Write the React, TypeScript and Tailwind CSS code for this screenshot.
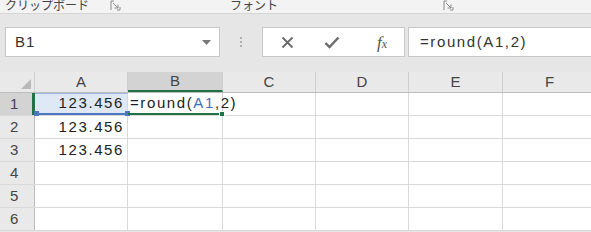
import React from "react";

const FONT = { fontFamily: '"Liberation Sans", "Noto Sans CJK JP", sans-serif' };

const COLS = ["A", "B", "C", "D", "E", "F"];
const ROWS = [1, 2, 3, 4, 5, 6];

function Launcher() {
  return (
    <svg width="11" height="11" viewBox="0 0 11 11" className="text-[#8a8a8a]">
      <path d="M1 10V1h3M10 7v3H7" fill="none" stroke="currentColor" strokeWidth="1" />
      <path d="M3 3l5 5M8 4.5V8H4.5" fill="none" stroke="currentColor" strokeWidth="1" />
    </svg>
  );
}

function Ribbon() {
  return (
    <div className="h-[14px] bg-[#f3f3f3] border-b border-[#d6d6d6] flex items-start text-[#444] text-[12px] leading-[13px]">
      <span className="ml-[5px] w-[105px] shrink-0 whitespace-nowrap">クリップボード</span>
      <span className="shrink-0">
        <Launcher />
      </span>
      <span className="ml-[109px] w-[60px] shrink-0 whitespace-nowrap">フォント</span>
      <span className="ml-[153px] shrink-0">
        <Launcher />
      </span>
    </div>
  );
}

function FormulaBar() {
  return (
    <div className="h-[58px] pt-[13px] flex items-start">
      {/* 名前ボックス */}
      <div className="ml-[5px] w-[215px] h-[30px] bg-white border border-[#c8c8c8] flex items-center justify-between pl-[9px] pr-[8px]">
        <span className="text-[15px] text-[#333] tracking-[1px]">B1</span>
        <svg width="9" height="5" viewBox="0 0 9 5">
          <path d="M0 0h9L4.5 5z" fill="#777" />
        </svg>
      </div>
      <div className="w-[42px] h-[30px] flex flex-col items-center justify-center gap-[2px]">
        <span className="w-[2px] h-[2px] bg-[#b0b0b0]" />
        <span className="w-[2px] h-[2px] bg-[#b0b0b0]" />
        <span className="w-[2px] h-[2px] bg-[#b0b0b0]" />
      </div>
      {/* ボタン群 */}
      <div className="w-[143px] h-[30px] bg-white border border-[#c8c8c8] flex items-center pl-[18px]">
        <svg width="13" height="13" viewBox="0 0 13 13">
          <path d="M1.5 1.5l10 10M11.5 1.5l-10 10" stroke="#6a6a6a" strokeWidth="1.8" fill="none" />
        </svg>
        <svg width="16" height="13" viewBox="0 0 16 13" className="ml-[30px]">
          <path d="M1.5 7l4 4L14.5 1.5" stroke="#6a6a6a" strokeWidth="2.4" fill="none" />
        </svg>
        <span
          className="ml-[37px] italic text-[17px] text-[#555] leading-none"
          style={{ fontFamily: '"Liberation Serif", serif' }}
        >
          f<span className="text-[12px]">x</span>
        </span>
      </div>
      <div className="ml-[3px] flex-1 h-[30px] bg-white border border-[#c8c8c8] border-r-0 flex items-center pl-[11px]">
        <span className="text-[15px] text-[#333] tracking-[1.6px]">=round(A1,2)</span>
      </div>
    </div>
  );
}

function Grid() {
  const widths = [35, 93, 95, 93, 93, 94, 94];
  return (
    <div className="bg-white">
      {/* 列見出し */}
      <div className="flex h-[21px] bg-[#e9e9e9] border-b border-[#bdbdbd]">
        <div className="w-[35px] shrink-0 border-r border-[#cfcfcf] relative">
          <svg width="10" height="10" viewBox="0 0 10 10" className="absolute right-[3px] bottom-[3px]">
            <path d="M10 0v10H0z" fill="#b9b9b9" />
          </svg>
        </div>
        {COLS.map((c, i) => (
          <div
            key={c}
            style={{ width: widths[i + 1] }}
            className={`shrink-0 flex items-center justify-center text-[15px] text-[#444] border-r border-[#cfcfcf] ${
              c === "B" ? "bg-[#d3d3d3] border-b-2 border-b-[#217346]" : ""
            }`}
          >
            {c}
          </div>
        ))}
      </div>
      {ROWS.map((r) => (
        <div key={r} className="flex h-[23px] border-b border-[#d9d9d9]">
          <div
            className={`w-[35px] shrink-0 flex items-center pl-[10px] text-[15px] text-[#444] border-r border-[#bdbdbd] ${
              r === 1 ? "bg-[#d3d3d3] border-r-[3px] border-r-[#217346]" : "bg-[#e9e9e9]"
            }`}
          >
            {r}
          </div>
          {/* A列 */}
          <div
            className={`w-[93px] shrink-0 relative flex items-center justify-end pr-[3px] text-[15px] text-[#222] tracking-[1.6px] border-r border-[#d9d9d9] ${
              r === 1 ? "bg-[#dfe8f5] border-b-2 border-b-[#4a78c2] border-t border-t-[#9fb8e0]" : ""
            }`}
          >
            {r <= 3 ? "123.456" : ""}
            {r === 1 && (
              <>
                <span className="absolute -left-[1px] -bottom-[3px] w-[5px] h-[5px] bg-[#4a78c2]" />
                <span className="absolute -right-[3px] -bottom-[3px] w-[5px] h-[5px] bg-[#4a78c2]" />
              </>
            )}
          </div>
          {/* B列 */}
          <div
            className={`w-[95px] shrink-0 relative flex items-center pl-[2px] text-[15px] text-[#222] tracking-[1.6px] border-r border-[#d9d9d9] ${
              r === 1 ? "border-b-2 border-b-[#217346] overflow-visible whitespace-nowrap" : ""
            }`}
          >
            {r === 1 && (
              <>
                <span className="relative z-10">
                  =round(<span className="text-[#3f6fc0]">A1</span>,2)
                </span>
                <span className="relative z-10 ml-[1px] w-[1px] h-[16px] bg-[#111]" />
                <span className="absolute -right-[3px] -bottom-[4px] w-[6px] h-[6px] bg-[#217346] border border-white" />
              </>
            )}
          </div>
          {[93, 93, 94, 94].map((w, i) => (
            <div key={i} style={{ width: w }} className="shrink-0 border-r border-[#d9d9d9]" />
          ))}
        </div>
      ))}
    </div>
  );
}

export default function App() {
  return (
    <div className="w-[591px] h-[232px] overflow-hidden bg-[#e6e6e6]" style={FONT}>
      <Ribbon />
      <FormulaBar />
      <Grid />
    </div>
  );
}
